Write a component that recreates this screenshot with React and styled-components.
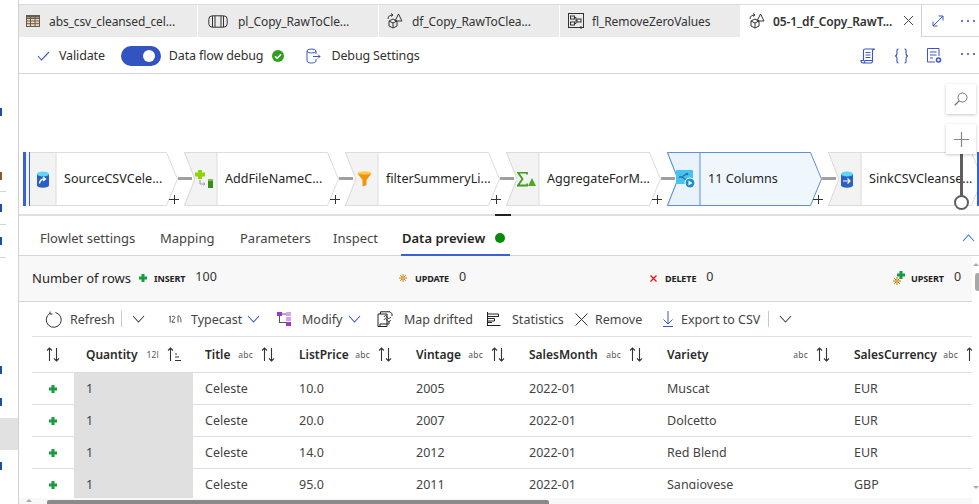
import React from "react";
import styled, { createGlobalStyle } from "styled-components";

const Global = createGlobalStyle`
  html, body { margin: 0; padding: 0; background: #fff; }
  body { font-family: "Noto Sans", "Open Sans", sans-serif; color: #323130; overflow: hidden; }
  * { box-sizing: border-box; }
`;

const Page = styled.div`
  width: 979px; height: 504px; display: flex; overflow: hidden; background: #fff;
  font-size: 12.5px; letter-spacing: 0; position: relative;
`;
const Sidebar = styled.aside`
  width: 19px; height: 504px; flex: none; border-right: 1px solid #d0d0d0;
  display: flex; flex-direction: column; padding-top: 96px;
`;
const SideRow = styled.div`
  height: ${p => p.$h || 32}px; flex: none; display: flex; align-items: center;
  background: ${p => (p.$selected ? "#e1e1e1" : "transparent")};
  margin-top: ${p => p.$mt || 0}px;
  border-bottom: ${p => (p.$line ? "1px solid #d4d4d4" : "none")};
  width: ${p => (p.$line ? "6px" : "100%")};
`;
const SideMark = styled.span`
  width: 2px; height: 8px; background: ${p => p.$c || "#1a4fa8"}; display: block;
`;
const Main = styled.main`
  flex: 1; min-width: 0; height: 504px; padding-top: 4px; display: flex; flex-direction: column;
`;
const TabBar = styled.div`
  height: 33px; flex: none; display: flex; border-top: 1px solid #dcdcdc; 
`;
const Tab = styled.div`
  width: ${p => p.$w}px; flex: none; margin-right: 1px; display: flex; align-items: center;
  padding-left: ${p => p.$pad}px; gap: ${p => p.$gap}px;
  background: ${p => (p.$active ? "#fff" : "#ebebeb")};
  border-right: ${p => (p.$active ? "1px solid #d0d0d0" : "none")};
  font-weight: ${p => (p.$active ? 600 : 400)};
  color: #333; white-space: nowrap; position: relative; font-size: 12px; letter-spacing: -.1px;
`;
const TabText = styled.span`
  padding-top: 1px;
`;
const TabClose = styled.span`
  position: absolute; right: 7px; top: 10px; display: flex;
`;
const TabTail = styled.div`
  flex: 1; display: flex; align-items: center; justify-content: space-between;
  padding: 0 3px 0 10px; border-bottom: 1px solid #d6d6d6; margin-left: -1px;
`;
const Toolbar = styled.div`
  height: 37px; flex: none; display: flex; align-items: center; padding: 1px 0 0 18px;
  border-bottom: 1px solid #d6d6d6; font-size: 12.5px; letter-spacing: -.14px;
`;
const ToolItem = styled.div`
  display: flex; align-items: center; gap: ${p => p.$gap}px; margin-left: ${p => p.$ml || 0}px; flex: none;
  white-space: nowrap;
`;
const Toggle = styled.span`
  width: 40px; height: 20px; border-radius: 10px; background: #3154c0; position: relative; display: block; flex: none;
  &::after {
    content: ""; position: absolute; right: 6px; top: 4px; width: 12px; height: 12px; border-radius: 50%; background: #fff;
  }
`;
const ToolRight = styled.div`
  margin-left: auto; display: flex; align-items: center; gap: 18px; padding-right: 3px;
`;
const Canvas = styled.section`
  height: 140px; flex: none; position: relative; overflow: hidden; padding: 78px 0 0 4px;
`;
const Flow = styled.div`
  display: flex; gap: 6px; width: max-content;
`;
const Node = styled.div`
  width: 155px; height: 54px; position: relative; display: flex; align-items: center; flex: none;
`;
const NodeShape = styled.svg`
  position: absolute; inset: 0; width: 155px; height: 54px;
`;
const IconSlot = styled.div`
  position: relative; width: 33px; height: 54px; flex: none; display: flex; align-items: center; padding-left: ${p => p.$pl}px;
`;
const NodeLabel = styled.span`
  position: relative; margin-left: 8px; padding-bottom: 2px; white-space: nowrap; font-size: 12.6px; color: #252525;
`;
const Link = styled.span`
  position: absolute; left: 155px; top: 25px; width: 14px; height: 3px; background: #a0a0a0;
`;
const PlusMark = styled.span`
  position: absolute; left: 146px; top: 43px; width: 10px; height: 10px;
  &::before, &::after { content: ""; position: absolute; background: #333; }
  &::before { left: 0; right: 0; top: 4px; height: 1px; }
  &::after { top: 0; bottom: 1px; left: 4.5px; width: 1px; }
`;
const BlueBar = styled.span`
  position: absolute; left: 0; top: 0; bottom: 0; width: 7px;
  border-left: 3px solid #3a62d8; border-right: 1.5px solid #3a62d8; background: #f3f3f3;
`;
const SinkBar = styled.span`
  position: absolute; left: 149px; top: 0; bottom: 0; width: 2px; background: #3a62d8;
`;
const ZoomBox = styled.button`
  position: absolute; left: 927px; top: ${p => p.$top}px; width: 30px; height: 30px; border: 0; padding: 0; background: #fff;
  box-shadow: 0 1px 3px rgba(0,0,0,.22); display: flex; align-items: center; justify-content: center; z-index: 2;
`;
const ZoomTrack = styled.span`
  position: absolute; left: 941px; top: 80px; width: 3px; height: 50px; background: #5e5e5e; z-index: 1;
`;
const ZoomKnob = styled.span`
  position: absolute; left: 935px; top: 121px; width: 15px; height: 15px; border-radius: 50%; border: 2px solid #5e5e5e; background: #fff; z-index: 2;
`;
const SplitBar = styled.div`
  height: 2px; flex: none; background: #e0e0e0; position: relative;
  &::after { content: ""; position: absolute; left: 476px; top: 0; width: 16px; height: 2px; background: #222; }
`;
const PanelTabs = styled.nav`
  height: 40px; flex: none; display: flex; align-items: stretch; padding: 0 0 0 21px; border-bottom: 1px solid #d6d6d6; position: relative;
`;
const PanelTab = styled.div`
  display: flex; align-items: center; padding-top: 4px; white-space: nowrap; color: #444; 
  width: ${p => p.$w}px; flex: none; position: relative; font-size: 13px;
  ${p => p.$active && `
    font-weight: 600; color: #252525;
    margin-left: -1px; padding-left: 1px; gap: 10px;
    &::after { content: ""; position: absolute; left: 0; right: 0; bottom: -1px; height: 2px; background: #3a62d8; }
  `}
`;
const Dot = styled.span`
  width: 10px; height: 10px; border-radius: 50%; background: #0a8a0a; display: block; flex: none;
`;
const Collapse = styled.span`
  position: absolute; right: 4px; top: 18px; display: flex;
`;
const Lower = styled.div`
  flex: 1; min-height: 0; display: flex;
`;
const LowerBody = styled.div`
  width: 953px; flex: none; display: flex; flex-direction: column; min-height: 0;
`;
const VScroll = styled.div`
  flex: 1; position: relative;
`;
const VThumb = styled.span`
  position: absolute; left: 3px; top: 17px; width: 5px; height: 18px; border-radius: 3px 0 0 3px; background: #a8a8a8;
`;
const ArrowTip = styled.span`
  position: absolute; left: ${p => p.$x}px; top: ${p => p.$y}px; width: 0; height: 0;
  border-left: 3px solid transparent; border-right: 3px solid transparent;
  ${p => (p.$down ? "border-top: 3px solid #aaa;" : "border-bottom: 3px solid #aaa;")}
`;
const StatsRow = styled.div`
  height: 46px; flex: none; background: #f8f8f8; border-bottom: 1px solid #d6d6d6; display: flex; align-items: center; padding: 0 0 1px 13px;
`;
const StatGroup = styled.div`
  width: ${p => p.$w}px; flex: none; display: flex; align-items: center; white-space: nowrap;
`;
const StatTitle = styled.span`
  font-size: 13px; color: #252525; margin-right: 8px; 
`;
const StatTag = styled.span`
  font-size: 9px; font-weight: 700; color: #222; margin: 1px 10px 0 ${p => p.$ml}px; letter-spacing: -.1px;
`;
const StatValue = styled.span`
  font-size: 12.5px; color: #333; margin-top: -3px;
`;
const ActionBar = styled.div`
  height: 34px; flex: none; display: flex; align-items: center; padding-left: 26px; font-size: 12.5px; color: #444;
`;
const ActionItem = styled.div`
  width: ${p => p.$w}px; flex: none; display: flex; align-items: center; gap: ${p => p.$gap || 0}px; white-space: nowrap;
  padding-left: ${p => p.$pl || 0}px;
`;
const ActionSep = styled.span`
  width: 1px; height: 16px; background: #c8c8c8; flex: none; display: block;
`;
const Caret = styled.span`
  display: flex; margin-left: ${p => p.$ml || 0}px;
`;
const TableWrap = styled.div`
  flex: 1; min-height: 0; margin-left: 13px; overflow: hidden; border-top: 1px solid #e2e2e2; 
`;
const Grid = styled.div`
  display: grid; grid-template-columns: 42px 119px 94px 117px 113px 138px 187px 150px; width: 960px;
`;
const HeadCell = styled.div`
  height: 36px; border-bottom: 1px solid #dedede; display: flex; align-items: center; font-weight: 600; font-size: 12px; color: #2a2a2a; white-space: nowrap;
  justify-content: ${p => (p.$center ? "center" : "flex-start")};
  padding: ${p => (p.$center ? "0" : "0 12px")};
`;
const TypeTag = styled.span`
  margin-left: auto; margin-right: 8px; font-size: 8.5px; font-weight: 400; color: #555; letter-spacing: .2px;
`;
const Cell = styled.div`
  height: 32px; border-bottom: 1px solid #dedede; display: flex; align-items: center; padding: 0 12px; white-space: nowrap; color: #444; font-size: 12.5px;
  ${p => p.$grey && "background: #e0e0e0; border-bottom-color: #e0e0e0;"}
  ${p => p.$center && "justify-content: center; padding: 0;"}
`;
const ClipText = styled.span`
  display: block; overflow: hidden; height: ${p => (p.$clip ? 13 : 18)}px; line-height: 18px; margin-top: ${p => (p.$clip ? -5 : 0)}px;
`;
const HScroll = styled.div`
  height: 6px; flex: none; background: #f8f8f8; position: relative;
`;
const HThumb = styled.span`
  position: absolute; left: 28px; top: 2px; width: 502px; height: 4px; background: #8a8a8a; border-radius: 2px 2px 0 0;
`;

const Blue = "#3a56c5";

const Plus = () => (
  <svg width="8" height="8" viewBox="0 0 8 8"><path d="M2.500 0h3v2.500H8v3H5.500V8h-3V5.500H0v-3h2.500z" fill="#13a03c" /></svg>
);
const Chevron = ({ c = "#444", up }) => (
  <svg width="13" height="8" viewBox="0 0 13 8"><path d={up ? "M1 7l5.500-6L12 7" : "M1 1l5.500 6L12 1"} fill="none" stroke={c} strokeWidth="1.100" /></svg>
);
const Sort = () => (
  <svg width="14" height="15" viewBox="0 0 14 15" fill="none" stroke="#333" strokeWidth="1.100">
    <path d="M3.500 14V1M1 3.500L3.500 1 6 3.500M10.500 1v13M8 11.500l2.500 2.500 2.500-2.500" />
  </svg>
);
const SortActive = () => (
  <svg width="14" height="15" viewBox="0 0 14 15" fill="none" stroke="#333" strokeWidth="1.100">
    <path d="M3.500 14V1M1 3.500L3.500 1 6 3.500M8 7h2M8 10h4M8 13.500h6" />
  </svg>
);
const GridIcon = () => (
  <svg width="14" height="12" viewBox="0 0 14 12" fill="none" stroke="#6b5a45" strokeWidth="1">
    <rect x=".5" y=".5" width="13" height="11" fill="#e4dccb" /><path d="M.5 3.500h13M.5 6h13M.5 8.700h13M4.500 .5v11M9 .5v11" /><path d="M.5 1.500h13" strokeWidth="2" />
  </svg>
);
const PipeIcon = () => (
  <svg width="20" height="13" viewBox="0 0 20 13" fill="none" stroke="#333" strokeWidth="1">
    <rect x=".8" y=".8" width="18.400" height="11.400" rx="3.500" /><path d="M4.500 1v11M7 1v11M13 1v11M15.500 1v11" />
  </svg>
);
const FlowIcon = () => (
  <svg width="18" height="16" viewBox="0 0 18 16" fill="none" stroke="#333" strokeWidth="1">
    <path d="M12.500 1l3.500 7h-7zM3 8l4-2 4 2v5l-4 2-4-2zM3 8l4 2 4-2M7 10v5M2 6c0-3 2-4 5-4M5 .5L7 2 5 3.500" />
  </svg>
);
const FlowletIcon = () => (
  <svg width="17" height="16" viewBox="0 0 17 16" fill="none" stroke="#333" strokeWidth="1">
    <rect x=".5" y=".5" width="15" height="14" /><rect x="2.500" y="3" width="4" height="3" /><rect x="2.500" y="9" width="4" height="3" /><rect x="9" y="6" width="4" height="3" /><path d="M6.500 4.500H8v6H6.500M8 7.500h1M13 13v3M11.500 14.500h3" />
  </svg>
);
const Close = () => (
  <svg width="11" height="11" viewBox="0 0 11 11" fill="none" stroke="#444" strokeWidth="1"><path d="M1 1l9 9M10 1l-9 9" /></svg>
);
const Expand = () => (
  <svg width="12" height="12" viewBox="0 0 12 12" fill="none" stroke={Blue} strokeWidth="1"><path d="M1 11L11 1M6.500 1H11v4.500M1 6.500V11h4.500" /></svg>
);
const Dots = ({ c = Blue, lift }) => (
  <svg width="16" height="4" viewBox="0 0 16 4" fill={c} style={lift ? { marginTop: -4 } : undefined}><circle cx="2" cy="2" r="1.100" /><circle cx="8" cy="2" r="1.100" /><circle cx="14" cy="2" r="1.100" /></svg>
);
const Check = () => (
  <svg width="13" height="10" viewBox="0 0 13 10" fill="none" stroke={Blue} strokeWidth="1.100"><path d="M1 5l3.500 4L12 1" /></svg>
);
const CircleOk = () => (
  <svg width="12" height="12" viewBox="0 0 12 12"><circle cx="6" cy="6" r="6" fill="#2f9e1f" /><path d="M3 6.200l2.200 2.200L9 4.300" fill="none" stroke="#fff" strokeWidth="1.500" /></svg>
);
const DebugSettings = () => (
  <svg width="15" height="16" viewBox="0 0 15 16" fill="none" stroke={Blue} strokeWidth="1">
    <ellipse cx="5.500" cy="3" rx="4.500" ry="2" /><path d="M1 3v10c0 1.200 2 2 4.500 2S10 14.200 10 13v-2M10 3v3M7 8.500h7M12 6.500l2 2-2 2" />
  </svg>
);
const Script = () => (
  <svg width="16" height="16" viewBox="0 0 16 16" fill="none" stroke={Blue} strokeWidth="1.100">
    <path d="M13 1H5c-1 0-1.500.7-1.500 1.500V12.500H1c0 1.500.7 2.500 2 2.500h8c1 0 1.500-1 1.500-2V3.500C12.500 2 13 1 15 1zM5.500 4.500h5M5.500 7h5M5.500 9.500h5M3 15c1.300 0 2-1 2-2.500h7" />
  </svg>
);
const Braces = () => (
  <svg width="15" height="16" viewBox="0 0 15 16" fill="none" stroke={Blue} strokeWidth="1.100">
    <path d="M4.500 1C2.500 1 3 2.500 3 5c0 2-.5 3-2 3 1.500 0 2 1 2 3 0 2.500-.5 4 1.500 4M10.500 1c2 0 1.500 1.500 1.500 4 0 2 .5 3 2 3-1.500 0-2 1-2 3 0 2.500.5 4-1.500 4" />
  </svg>
);
const DocGear = () => (
  <svg width="15" height="16" viewBox="0 0 15 16" fill="none" stroke={Blue} strokeWidth="1">
    <path d="M8 14H.5V.5H12V8M3 4h6.500M3 7h6.500M3 10h3" /><circle cx="11.500" cy="12" r="2" strokeWidth="1.600" />
  </svg>
);
const SearchI = () => (
  <svg width="14" height="14" viewBox="0 0 14 14" fill="none" stroke="#777" strokeWidth="1"><circle cx="8.500" cy="5.500" r="4.500" /><path d="M5.300 8.700L.8 13.200" strokeWidth="1.300" /></svg>
);
const PlusThin = () => (
  <svg width="15" height="15" viewBox="0 0 15 15" fill="none" stroke="#888" strokeWidth="1.200"><path d="M0 7.500h15M7.500 0v15" /></svg>
);
const SourceIco = () => (
  <svg width="14" height="17" viewBox="0 0 14 17">
    <path d="M1 3v11.500c0 1.200 2.500 2.200 6 2.200s6-1 6-2.200V3z" fill="#2a5fc4" />
    <ellipse cx="7" cy="3" rx="6" ry="2.500" fill="#5fd6f5" />
    <path d="M3.500 12.500c.3-3 2-4.500 5-4.500M7 6l2.500 2L7 10" fill="none" stroke="#fff" strokeWidth="1.300" />
  </svg>
);
const SinkIco = () => (
  <svg width="14" height="17" viewBox="0 0 14 17">
    <path d="M1 3v11.500c0 1.200 2.500 2.200 6 2.200s6-1 6-2.200V3z" fill="#2a5fc4" />
    <ellipse cx="7" cy="3" rx="6" ry="2.500" fill="#5fd6f5" />
    <path d="M3 10h7M7.500 7.500L10 10l-2.500 2.500" fill="none" stroke="#fff" strokeWidth="1.200" />
  </svg>
);
const DeriveIco = () => (
  <svg width="18" height="18" viewBox="0 0 18 18">
    <path d="M3 0h4v2.500h3V6.500H7V9H3V6.500H0V2.500h3z" fill="#8fd400" />
    <path d="M5 10v4h5M8.500 12.500L10 14l-1.500 1.500" fill="none" stroke="#999" strokeWidth="1" />
    <path d="M13 9h5v9h-5z" fill="#3c8c1a" />
    <path d="M13 9h5v2h-5z" fill="#7ac043" />
  </svg>
);
const FunnelIco = () => (
  <svg width="15" height="16" viewBox="0 0 15 16">
    <ellipse cx="7.500" cy="2.200" rx="7" ry="2" fill="#ffc94a" />
    <path d="M.5 2.500L5.500 9v6.500l4-1.500V9l5-6.500c-2 1.500-12 1.500-14 0z" fill="#f2920d" />
  </svg>
);
const SigmaIco = () => (
  <svg width="19" height="15" viewBox="0 0 19 15">
    <path d="M10 2.500V.5H1L5.500 7 1 13.500h9v-2" fill="none" stroke="#3f9e1f" strokeWidth="1.800" />
    <path d="M15 6l4 8h-8z" fill="#4fa81f" />
  </svg>
);
const SelectIco = () => (
  <svg width="20" height="19" viewBox="0 0 20 19">
    <rect x="0" y="0" width="17" height="14" rx="1" fill="#45c3ee" />
    <path d="M3 7h3M6 7l4-3M6 7l4 3" stroke="#2a6fb0" strokeWidth="1.300" fill="none" />
    <circle cx="11" cy="4" r="1.300" fill="#2a6fb0" /><circle cx="11" cy="10" r="1.300" fill="#2a6fb0" />
    <circle cx="14" cy="13" r="5.500" fill="#fff" />
    <circle cx="14" cy="13" r="4.500" fill="#1b8ecf" />
    <path d="M12.500 10.500v5l4-2.500z" fill="#fff" />
  </svg>
);
const Refresh = () => (
  <svg width="17" height="17" viewBox="0 0 17 17" fill="none" stroke="#333" strokeWidth="1"><path d="M10.500 1.500A7.500 7.500 0 1 1 5 2.300M5 .5v2.500h2.500" /></svg>
);
const Modify = () => (
  <svg width="14" height="14" viewBox="0 0 14 14" fill="#a335c9">
    <rect x="0" y="0" width="5" height="4" /><rect x="9" y="0" width="5" height="4" fill="#d8a3ea" /><rect x="9" y="5" width="5" height="4" fill="#d8a3ea" /><rect x="9" y="10" width="5" height="4" /><path d="M2 4h1v6h6v1H2zM5 1.500h4v1H5z" fill="#555" />
  </svg>
);
const MapDrift = () => (
  <svg width="16" height="16" viewBox="0 0 16 16" fill="none" stroke="#222" strokeWidth="1">
    <path d="M3.500 3V.8H13l2 2V5M1 3h9v12.500H1zM3 15.500V13h9V10M7 9c1-2 2-2 3 0s2 2 4 0M7 6c1-2 2-2 3 0s2 2 4 0" />
  </svg>
);
const StatIco = () => (
  <svg width="14" height="14" viewBox="0 0 14 14" fill="none" stroke="#222" strokeWidth="1"><path d="M.5 0v14M.5 13.500h13M.5 2h11v2.500H.5M.5 6.500h7V9H.5M.5 10.500H5" /></svg>
);
const RemoveIco = () => (
  <svg width="13" height="13" viewBox="0 0 13 13" fill="none" stroke="#333" strokeWidth="1"><path d="M.5.500l12 12M12.500.500l-12 12" /></svg>
);
const Download = () => (
  <svg width="10" height="16" viewBox="0 0 10 16" fill="none" stroke={Blue} strokeWidth="1"><path d="M5 0v13M.5 8.500L5 13l4.500-4.500M0 15.500h10" /></svg>
);
const Star = () => (
  <svg width="8" height="8" viewBox="0 0 8 8" fill="none" stroke="#c77f0a" strokeWidth="1"><path d="M4 0v8M0 4h8M1.200 1.200l5.600 5.600M6.800 1.200L1.200 6.800" /><circle cx="4" cy="4" r="1.600" fill="#e7a53a" stroke="none" /></svg>
);
const XRed = () => (
  <svg width="7" height="7" viewBox="0 0 7 7" fill="none" stroke="#e01414" strokeWidth="1.300"><path d="M.5.500l6 6M6.500.500l-6 6" /></svg>
);
const Upsert = () => (
  <svg width="12" height="14" viewBox="0 0 12 14" style={{ overflow: "visible" }}>
    <path transform="translate(4 0)" d="M2.500 0h3v2.500H8v3H5.500V8h-3V5.500H0v-3h2.500z" fill="#13a03c" />
    <g transform="translate(0 6)" fill="none" stroke="#c77f0a" strokeWidth="1">
      <path d="M4 0v8M0 4h8M1.200 1.200l5.600 5.600M6.800 1.200L1.200 6.800" /><circle cx="4" cy="4" r="1.600" fill="#e7a53a" stroke="none" />
    </g>
  </svg>
);
const Type12 = () => (
  <svg width="14" height="8" viewBox="0 0 14 8" fill="none" stroke="#444" strokeWidth=".9">
    <path d="M1 2l1.200-1v6.500M4 2c.3-1 2.800-1 2.800.5S4 5.500 4 7.300h3M10 .8c2 0 3 2 3 6.500M10 .8v6.500" />
  </svg>
);

const tabs = [
  { w: 178, pad: 7, gap: 9, icon: <GridIcon />, label: "abs_csv_cleansed_cel..." },
  { w: 180, pad: 10, gap: 10, icon: <PipeIcon />, label: "pl_Copy_RawToCle..." },
  { w: 180, pad: 7, gap: 8, icon: <FlowIcon />, label: "df_Copy_RawToClea..." },
  { w: 180, pad: 8, gap: 7, icon: <FlowletIcon />, label: "fl_RemoveZeroValues" },
  { w: 181, pad: 7, gap: 7, icon: <FlowIcon />, label: "05-1_df_Copy_RawT...", active: true },
];

const nodes = [
  { id: "src", label: "SourceCSVCele...", icon: <SourceIco />, first: true, pl: 13 },
  { id: "derive", label: "AddFileNameC...", icon: <DeriveIco />, pl: 11 },
  { id: "filter", label: "filterSummeryLi...", icon: <FunnelIco />, pl: 12 },
  { id: "agg", label: "AggregateForM...", icon: <SigmaIco />, pl: 11 },
  { id: "sel", label: "11 Columns", icon: <SelectIco />, selected: true, pl: 9 },
  { id: "sink", label: "SinkCSVCleanse...", icon: <SinkIco />, last: true, pl: 12 },
];

const FlowNode = ({ n }) => {
  const stroke = n.selected ? "#5b8fe0" : "#dcdcdc";
  const fill = n.selected ? "#eff6fc" : "#fff";
  const icoFill = n.selected ? "#eaf3fb" : "#f3f3f3";
  const left = n.first ? "0.500,0.500 0.500,53.500" : "0.500,0.500 11,27 0.500,53.500";
  const body = `${left} 143.500,53.500 154.500,27 143.500,0.500`;
  const ico = `${left} 33,53.500 33,0.500`;
  return (
    <Node>
      <NodeShape viewBox="0 0 155 54">
        <polygon points={body} fill={fill} stroke={stroke} />
        <polygon points={ico} fill={icoFill} stroke={stroke} />
      </NodeShape>
      {n.first && <BlueBar />}
      <IconSlot $pl={n.pl}>{n.icon}</IconSlot>
      <NodeLabel>{n.label}</NodeLabel>
      {n.last ? <SinkBar /> : <><Link /><PlusMark /></>}
    </Node>
  );
};

const headers = [
  { name: "Title", type: "abc" },
  { name: "ListPrice", type: "abc" },
  { name: "Vintage", type: "abc" },
  { name: "SalesMonth", type: "abc" },
  { name: "Variety", type: "abc" },
  { name: "SalesCurrency", type: "abc" },
];
const rows = [
  ["Celeste", "10.0", "2005", "2022-01", "Muscat", "EUR"],
  ["Celeste", "20.0", "2007", "2022-01", "Dolcetto", "EUR"],
  ["Celeste", "14.0", "2012", "2022-01", "Red Blend", "EUR"],
  ["Celeste", "95.0", "2011", "2022-01", "Sangiovese", "GBP"],
];

export default function App() {
  return (
    <>
      <Global />
      <Page>
        <Sidebar>
          <SideRow><SideMark /></SideRow>
          <SideRow $mt={32} $h={32} $line><SideMark $c="#8a5a2a" /></SideRow>
          <SideRow $h={33} $line><SideMark /></SideRow>
          <SideRow $h={33} $line><SideMark /></SideRow>
          <SideRow $mt={96}><SideMark /></SideRow>
          <SideRow><SideMark /></SideRow>
          <SideRow $selected />
          <SideRow><SideMark /></SideRow>
        </Sidebar>
        <Main>
          <TabBar>
            {tabs.map(t => (
              <Tab key={t.label} $w={t.w} $pad={t.pad} $gap={t.gap} $active={t.active}>
                {t.icon}<TabText>{t.label}</TabText>
                {t.active && <TabClose><Close /></TabClose>}
              </Tab>
            ))}
            <TabTail><Expand /><Dots /></TabTail>
          </TabBar>
          <Toolbar>
            <ToolItem $gap={9}><Check /><span>Validate</span></ToolItem>
            <ToolItem $gap={8} $ml={16}><Toggle /><span>Data flow debug</span></ToolItem>
            <ToolItem $ml={9}><CircleOk /></ToolItem>
            <ToolItem $gap={10} $ml={22}><DebugSettings /><span>Debug Settings</span></ToolItem>
            <ToolRight><Script /><Braces /><DocGear /><Dots lift /></ToolRight>
          </Toolbar>
          <Canvas>
            <Flow>{nodes.map(n => <FlowNode key={n.id} n={n} />)}</Flow>
            <ZoomBox $top={10}><SearchI /></ZoomBox>
            <ZoomBox $top={50}><PlusThin /></ZoomBox>
            <ZoomTrack />
            <ZoomKnob />
          </Canvas>
          <SplitBar />
          <PanelTabs>
            <PanelTab $w={120}>Flowlet settings</PanelTab>
            <PanelTab $w={80}>Mapping</PanelTab>
            <PanelTab $w={93}>Parameters</PanelTab>
            <PanelTab $w={69}>Inspect</PanelTab>
            <PanelTab $active $w={109}><span>Data preview</span><Dot /></PanelTab>
            <Collapse><Chevron up c="#3a7bc8" /></Collapse>
          </PanelTabs>
          <Lower>
            <LowerBody>
              <StatsRow>
                <StatGroup $w={367}>
                  <StatTitle>Number of rows</StatTitle><Plus />
                  <StatTag $ml={7}>INSERT</StatTag><StatValue>100</StatValue>
                </StatGroup>
                <StatGroup $w={251}><Star /><StatTag $ml={8}>UPDATE</StatTag><StatValue>0</StatValue></StatGroup>
                <StatGroup $w={243}><XRed /><StatTag $ml={8}>DELETE</StatTag><StatValue>0</StatValue></StatGroup>
                <StatGroup $w={72}><Upsert /><StatTag $ml={6}>UPSERT</StatTag><StatValue>0</StatValue></StatGroup>
              </StatsRow>
              <ActionBar>
                <ActionItem $w={76} $gap={8}><Refresh /><span>Refresh</span></ActionItem>
                <ActionSep />
                <ActionItem $w={46} $pl={10}><Chevron /></ActionItem>
                <ActionItem $w={109} $gap={9}><Type12 /><span>Typecast</span><Caret $ml={-4}><Chevron c={Blue} /></Caret></ActionItem>
                <ActionItem $w={100} $gap={11}><Modify /><span>Modify</span><Caret $ml={-6}><Chevron c={Blue} /></Caret></ActionItem>
                <ActionItem $w={110} $gap={11}><MapDrift /><span>Map drifted</span></ActionItem>
                <ActionItem $w={88} $gap={11}><StatIco /><span>Statistics</span></ActionItem>
                <ActionItem $w={88} $gap={7}><RemoveIco /><span>Remove</span></ActionItem>
                <ActionItem $w={105} $gap={8}><Download /><span>Export to CSV</span></ActionItem>
                <ActionSep />
                <ActionItem $w={30} $pl={10}><Chevron /></ActionItem>
              </ActionBar>
              <TableWrap>
                <Grid>
                  <HeadCell $center><Sort /></HeadCell>
                  <HeadCell>Quantity<TypeTag>12l</TypeTag><SortActive /></HeadCell>
                  {headers.map(h => (
                    <HeadCell key={h.name}>{h.name}<TypeTag>{h.type}</TypeTag><Sort /></HeadCell>
                  ))}
                  {rows.map((r, i) => (
                    <React.Fragment key={i}>
                      <Cell $center><Plus /></Cell>
                      <Cell $grey>1</Cell>
                      {r.map((v, j) => (
                        <Cell key={j}><ClipText $clip={i === 3}>{v}</ClipText></Cell>
                      ))}
                    </React.Fragment>
                  ))}
                </Grid>
              </TableWrap>
              <HScroll>
                <ArrowTip $x={7} $y={1} />
                <HThumb />
              </HScroll>
            </LowerBody>
            <VScroll>
              <ArrowTip $x={1} $y={7} />
              <VThumb />
              <ArrowTip $x={1} $y={230} $down />
            </VScroll>
          </Lower>
        </Main>
      </Page>
    </>
  );
}
